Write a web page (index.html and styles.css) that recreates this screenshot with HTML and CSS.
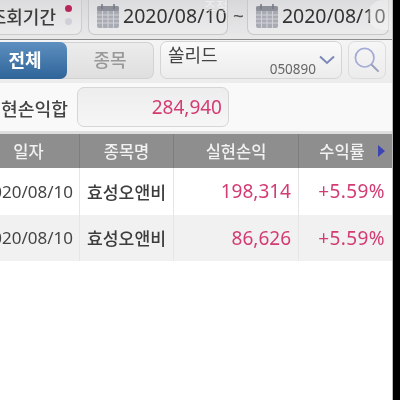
FILE: index.html
```html
<!DOCTYPE html>
<html lang="ko">
<head>
    <meta charset="UTF-8">
    <title>실현손익</title>
    <link rel="stylesheet" href="styles.css">
</head>
<body>
    <div class="screen">
        <!-- 조회기간 -->
        <div class="period-bar">
            <div class="period-label">
                <span class="clip-left">조회기간</span>
                <span class="dots"><i class="dot dot-on"></i><i class="dot"></i></span>
            </div>
            <div class="date-box">
                <svg class="cal" viewBox="0 0 24 26"><rect x="1" y="3" width="22" height="22" rx="2" fill="#a9abb4"/><rect x="1" y="3" width="22" height="5" rx="2" fill="#8d8f99"/><path d="M6 1v5M18 1v5" stroke="#77798a" stroke-width="1.6"/><path d="M1 12h22M1 16h22M1 20h22M6.500 8v17M12 8v17M17.500 8v17" stroke="#d2d3d8" stroke-width="1"/></svg>
                <span>2020/08/10</span>
            </div>
            <span class="tilde">~</span>
            <div class="date-box date-box-last">
                <svg class="cal" viewBox="0 0 24 26"><rect x="1" y="3" width="22" height="22" rx="2" fill="#a9abb4"/><rect x="1" y="3" width="22" height="5" rx="2" fill="#8d8f99"/><path d="M6 1v5M18 1v5" stroke="#77798a" stroke-width="1.6"/><path d="M1 12h22M1 16h22M1 20h22M6.500 8v17M12 8v17M17.500 8v17" stroke="#d2d3d8" stroke-width="1"/></svg>
                <span>2020/08/10</span>
            </div>
        </div>
        <!-- 종목 선택 -->
        <div class="stock-bar">
            <div class="tabs">
                <div class="tab tab-on">전체</div>
                <div class="tab">종목</div>
            </div>
            <div class="select">
                <span class="select-name">쏠리드</span>
                <span class="select-code">050890</span>
                <svg class="chevron" viewBox="0 0 16 10"><path d="M1 1.500l7 6.500 7-6.500" fill="none" stroke="#7c88b8" stroke-width="2"/></svg>
            </div>
            <div class="search">
                <svg viewBox="0 0 28 28" width="26" height="26"><circle cx="11.500" cy="11.500" r="10" fill="none" stroke="#a3aad6" stroke-width="1.800"/><path d="M18.500 18.500l8 8" stroke="#9aa0b8" stroke-width="2.200"/></svg>
            </div>
        </div>
        <!-- 합계 -->
        <div class="total-bar">
            <span class="total-label clip-left">실현손익합</span>
            <div class="total-box">284,940</div>
        </div>
        <!-- 목록 -->
        <div class="table">
            <div class="row head">
                <div class="cell cell-center cell-first">일자</div>
                <div class="cell cell-center">종목명</div>
                <div class="cell cell-center">실현손익</div>
                <div class="cell cell-center">수익률<i class="arrow"></i></div>
            </div>
            <div class="row">
                <div class="cell clip-left date">2020/08/10</div>
                <div class="cell cell-center name">효성오앤비</div>
                <div class="cell cell-right red">198,314</div>
                <div class="cell cell-right red pct">+5.59%</div>
            </div>
            <div class="row row-alt">
                <div class="cell clip-left date">2020/08/10</div>
                <div class="cell cell-center name">효성오앤비</div>
                <div class="cell cell-right red">86,626</div>
                <div class="cell cell-right red pct">+5.59%</div>
            </div>
        </div>
        <div class="overlay-text">조절</div>
        <div class="overlay-dot"></div>
    </div>
</body>
</html>
```

FILE: styles.css
```css
html, body {
    margin: 0;
    padding: 0;
    height: 100%;
}
body {
    background-color: #000;
    overflow: hidden;
    font-family: "Noto Sans", "Noto Sans CJK KR", sans-serif;
}
.screen {
    position: relative;
    width: 393px;
    height: 400px;
    background-color: #fff;
    overflow: hidden;
    color: #444;
    border-right: 1px solid #bbb;
    box-sizing: border-box;
    filter: blur(0.5px);
}
.clip-left {
    display: flex;
    justify-content: flex-end;
    white-space: nowrap;
    overflow: hidden;
}
.period-bar {
    display: flex;
    align-items: flex-start;
    height: 39px;
    background: linear-gradient(#d8d8da, #e9e9ea);
    border-bottom: 1px solid #8c8c8c;
    box-sizing: content-box;
}
.period-label {
    display: flex;
    justify-content: space-between;
    width: 82px;
    height: 35px;
    box-sizing: border-box;
    border: 1px solid #ccc;
    border-left: 0;
    border-top: 0;
    border-radius: 0 0 7px 0;
    background: linear-gradient(#dcdcde, #ececed);
    font-size: 18px;
    font-weight: 500;
    line-height: 35px;
    color: #3c3c3c;
}
.period-label .clip-left {
    width: 56px;
}
.dots {
    display: flex;
    flex-direction: column;
    gap: 6px;
    padding: 5px 9px 0 0;
}
.dot {
    width: 7px;
    height: 7px;
    border-radius: 50%;
    background-color: #cfd0d8;
}
.dot-on {
    background-color: #b9275a;
}
.date-box {
    display: flex;
    align-items: center;
    gap: 3px;
    width: 140px;
    height: 35px;
    margin-left: 6px;
    padding: 0 0 3px 7px;
    box-sizing: border-box;
    border: 1px solid #c8c8c8;
    border-top: 0;
    border-radius: 0 0 7px 7px;
    background: linear-gradient(#dcdcde, #ececed);
    font-size: 19.500px;
    color: #333;
    white-space: nowrap;
    overflow: hidden;
}
.date-box-last {
    margin-left: 3px;
    width: 142px;
}
.cal {
    width: 24px;
    height: 26px;
    flex: none;
}
.tilde {
    margin-left: 5px;
    font-size: 19px;
    line-height: 32px;
    color: #555;
}
.stock-bar {
    display: flex;
    align-items: flex-start;
    height: 43px;
    padding-top: 1px;
    box-sizing: border-box;
    background: linear-gradient(#f4f4f4, #ececec);
}
.tabs {
    display: flex;
    width: 154px;
    height: 37px;
    margin-top: 1px;
    border: 1px solid #d2d2d2;
    border-left: 0;
    box-sizing: border-box;
    border-radius: 0 7px 7px 0;
    background: linear-gradient(#ececec, #dfdfdf);
}
.tab {
    flex: 1;
    text-align: center;
    font-size: 18px;
    font-weight: 500;
    line-height: 35px;
    color: #999;
}
.tab-on {
    flex: none;
    width: 67px;
    box-sizing: border-box;
    padding-right: 17px;
    margin: -1px 0;
    line-height: 37px;
    border-radius: 0 7px 7px 0;
    background: linear-gradient(#5d90c0, #2f6499);
    color: #fff;
    font-weight: 700;
}
.select {
    position: relative;
    width: 182px;
    height: 38px;
    margin-left: 6px;
    box-sizing: border-box;
    border: 1px solid #d4d4d4;
    border-radius: 7px;
    background: linear-gradient(#fafafa, #ececec);
}
.select-name {
    position: absolute;
    left: 7px;
    top: 1px;
    font-size: 18px;
    line-height: 24px;
    color: #444;
}
.select-code {
    position: absolute;
    right: 25px;
    bottom: 0;
    font-size: 13.500px;
    line-height: 18px;
    color: #666;
}
.chevron {
    position: absolute;
    right: 6px;
    top: 13px;
    width: 16px;
    height: 10px;
}
.search {
    display: flex;
    align-items: center;
    justify-content: center;
    width: 38px;
    height: 38px;
    margin-left: 6px;
    box-sizing: border-box;
    border: 1px solid #dcdcdc;
    border-radius: 7px;
    background: linear-gradient(#f6f6f6, #ececec);
}
.total-bar {
    display: flex;
    align-items: center;
    height: 48px;
    background-color: #f9f9f9;
}
.total-label {
    width: 68px;
    padding-top: 2px;
    font-size: 18.200px;
    font-weight: 500;
    color: #444;
}
.total-box {
    width: 152px;
    height: 40px;
    margin-left: 9px;
    padding-right: 6px;
    box-sizing: border-box;
    border: 1px solid #d6d6d6;
    border-radius: 7px;
    background: linear-gradient(#ededed, #f6f6f6);
    color: #d33c72;
    font-size: 19px;
    line-height: 38px;
    text-align: right;
}
.table {
    border-top: 3px solid #dedede;
}
.row {
    display: grid;
    grid-template-columns: 80px 94px 125px 93px;
    height: 46.500px;
}
.row-alt {
    background-color: #f1f1f1;
}
.head {
    height: 34px;
    background-color: #8e8e8e;
    color: #f1f1f1;
    font-weight: 500;
}
.cell {
    display: flex;
    align-items: center;
    border-right: 1px solid #e6e6e6;
    box-sizing: border-box;
    font-size: 16.500px;
}
.head .cell {
    border-right-color: #7e7e7e;
}
.head .cell-first {
    padding-right: 22px;
}
.cell:last-child {
    border-right: 0;
}
.cell-center {
    justify-content: center;
}
.cell-right {
    justify-content: flex-end;
    padding-right: 7px;
}
.date {
    padding-right: 6px;
    font-size: 17px;
}
.name {
    font-weight: 500;
    font-size: 17.200px;
    color: #3c3c3c;
}
.red {
    color: #d33c72;
    font-size: 19px;
}
.pct {
    letter-spacing: 0.4px;
}
.arrow {
    width: 0;
    height: 0;
    margin-left: 13px;
    margin-right: -13px;
    border-left: 7px solid #3c44b4;
    border-top: 6px solid transparent;
    border-bottom: 6px solid transparent;
}
.overlay-text {
    position: absolute;
    left: 204px;
    top: -4px;
    font-size: 13px;
    color: rgba(255, 255, 255, 0.5);
}
.overlay-dot {
    position: absolute;
    left: 368px;
    top: 0;
    width: 25px;
    height: 30px;
    border-radius: 15px 0 0 15px;
    background-color: rgba(255, 255, 255, 0.35);
}
```
